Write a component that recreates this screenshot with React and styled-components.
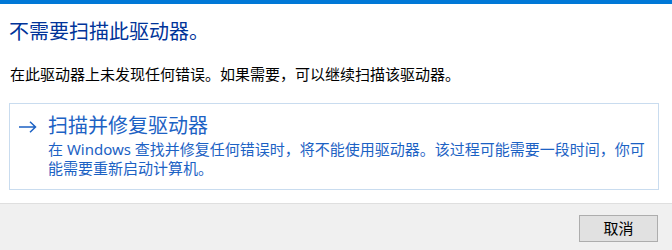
import React from 'react';
import styled, { createGlobalStyle } from 'styled-components';

const GlobalStyle = createGlobalStyle`
  html, body, #root {
    margin: 0;
    height: 100%;
  }
  body {
    background: #ffffff;
    font-family: "Noto Sans", "Noto Sans CJK SC", sans-serif;
    -webkit-font-smoothing: antialiased;
  }
`;

const Dialog = styled.div`
  height: 100vh;
  display: flex;
  flex-direction: column;
  box-sizing: border-box;
  border-top: 4px solid #0078d7;
  background: #ffffff;
`;

const Content = styled.div`
  padding: 14px 13px 0 9px;
  display: flex;
  flex-direction: column;
`;

const MainInstruction = styled.h1`
  margin: 0;
  font-size: 20px;
  line-height: 28px;
  font-weight: 400;
  color: #003399;
`;

const BodyText = styled.p`
  margin: 18px 0 0 1px;
  font-size: 15px;
  line-height: 20px;
  color: #000000;
`;

const CommandLink = styled.div`
  margin-top: 19px;
  display: grid;
  grid-template-columns: 30px 606px;
  padding: 8px 4px 11px 8px;
  border: 1px solid #c9dcef;
  cursor: pointer;
`;

const ArrowCell = styled.div`
  height: 28px;
  display: flex;
  align-items: center;
  padding-top: 2px;
  box-sizing: border-box;
`;

const LinkText = styled.div`
  display: flex;
  flex-direction: column;
`;

const LinkTitle = styled.div`
  font-size: 20px;
  line-height: 28px;
  color: #1c62c4;
`;

const LinkNote = styled.div`
  font-size: 15px;
  line-height: 19px;
  color: #1c62c4;
`;

const Footer = styled.div`
  flex: 1;
  margin-top: 13px;
  border-top: 1px solid #dfdfdf;
  background: #f0f0f0;
  display: flex;
  justify-content: flex-end;
  align-items: flex-start;
  padding: 11px 14px 0 0;
`;

const Button = styled.button`
  width: 79px;
  height: 27px;
  box-sizing: border-box;
  border: 1px solid #adadad;
  background: #e1e1e1;
  font-family: "Noto Sans", "Noto Sans CJK SC", sans-serif;
  font-size: 15px;
  line-height: 1;
  color: #000000;
  padding: 0;
`;

const Arrow = () => (
  <svg width="19" height="12" viewBox="0 0 19 12" fill="none">
    <path d="M1 6H17.5M12 0.8L17.5 6L12 11.2" stroke="#1c62c4" strokeWidth="1.5" />
  </svg>
);

export default function App() {
  return (
    <>
      <GlobalStyle />
      <Dialog>
        <Content>
          <MainInstruction>不需要扫描此驱动器。</MainInstruction>
          <BodyText>在此驱动器上未发现任何错误。如果需要，可以继续扫描该驱动器。</BodyText>
          <CommandLink>
            <ArrowCell>
              <Arrow />
            </ArrowCell>
            <LinkText>
              <LinkTitle>扫描并修复驱动器</LinkTitle>
              <LinkNote>
                在 Windows 查找并修复任何错误时，将不能使用驱动器。该过程可能需要一段时间，你可能需要重新启动计算机。
              </LinkNote>
            </LinkText>
          </CommandLink>
        </Content>
        <Footer>
          <Button>取消</Button>
        </Footer>
      </Dialog>
    </>
  );
}
